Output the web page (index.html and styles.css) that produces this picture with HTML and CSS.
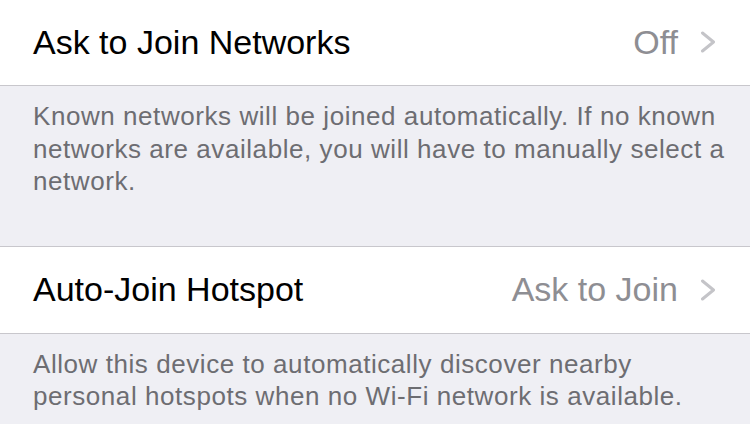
FILE: index.html
```html
<!DOCTYPE html>
<html lang="en">
<head>
    <meta charset="UTF-8">
    <meta name="viewport" content="width=device-width, initial-scale=1.0">
    <title>Wi-Fi</title>
    <link rel="stylesheet" href="styles.css">
</head>
<body>

    <div class="group first">
        <div class="cell">
            <span class="label">Ask to Join Networks</span>
            <span class="value">Off</span>
            <svg class="chevron" width="16" height="22" viewBox="0 0 16 22"><path d="M2.5 2 L13.5 11 L2.5 20"/></svg>
        </div>
    </div>
    <p class="footer">Known networks will be joined automatically. If no known networks are available, you will have to manually select a network.</p>

    <div class="group">
        <div class="cell">
            <span class="label">Auto-Join Hotspot</span>
            <span class="value">Ask to Join</span>
            <svg class="chevron" width="16" height="22" viewBox="0 0 16 22"><path d="M2.5 2 L13.5 11 L2.5 20"/></svg>
        </div>
    </div>
    <p class="footer last">Allow this device to automatically discover nearby personal hotspots when no Wi-Fi network is available.</p>

</body>
</html>
```

FILE: styles.css
```css
/* iOS settings look */
*{
    margin : 0;
    box-sizing: border-box;
}

body{
    background-color: #efeff4;
    font-family: "Liberation Sans", Arial, sans-serif;
    overflow: hidden;
}

.group{
    background-color: #fff;
    border-top: 1px solid #c8c7cc;
    border-bottom: 1px solid #c8c7cc;
}

/* top row is cut by the screen edge */
.group.first{
    margin-top: -2px;
}

.cell{
    display: flex;
    align-items: center;
    height: 86px;
    padding: 0 34px 0 33px;
}

.label{
    flex: 1;
    font-size: 34px;
    color: #000;
}

.value{
    font-size: 34px;
    color: #8e8e93;
    margin-right: 22px;
}

.chevron path{
    fill: none;
    stroke: #c4c4c8;
    stroke-width: 3;
    stroke-linecap: round;
    stroke-linejoin: round;
}

.footer{
    padding: 14px 18px 48px 33px;
    font-size: 26px;
    line-height: 32.5px;
    letter-spacing: 0.56px;
    color: #6d6d72;
}

.footer.last{
    padding-bottom: 8px;
}
```
